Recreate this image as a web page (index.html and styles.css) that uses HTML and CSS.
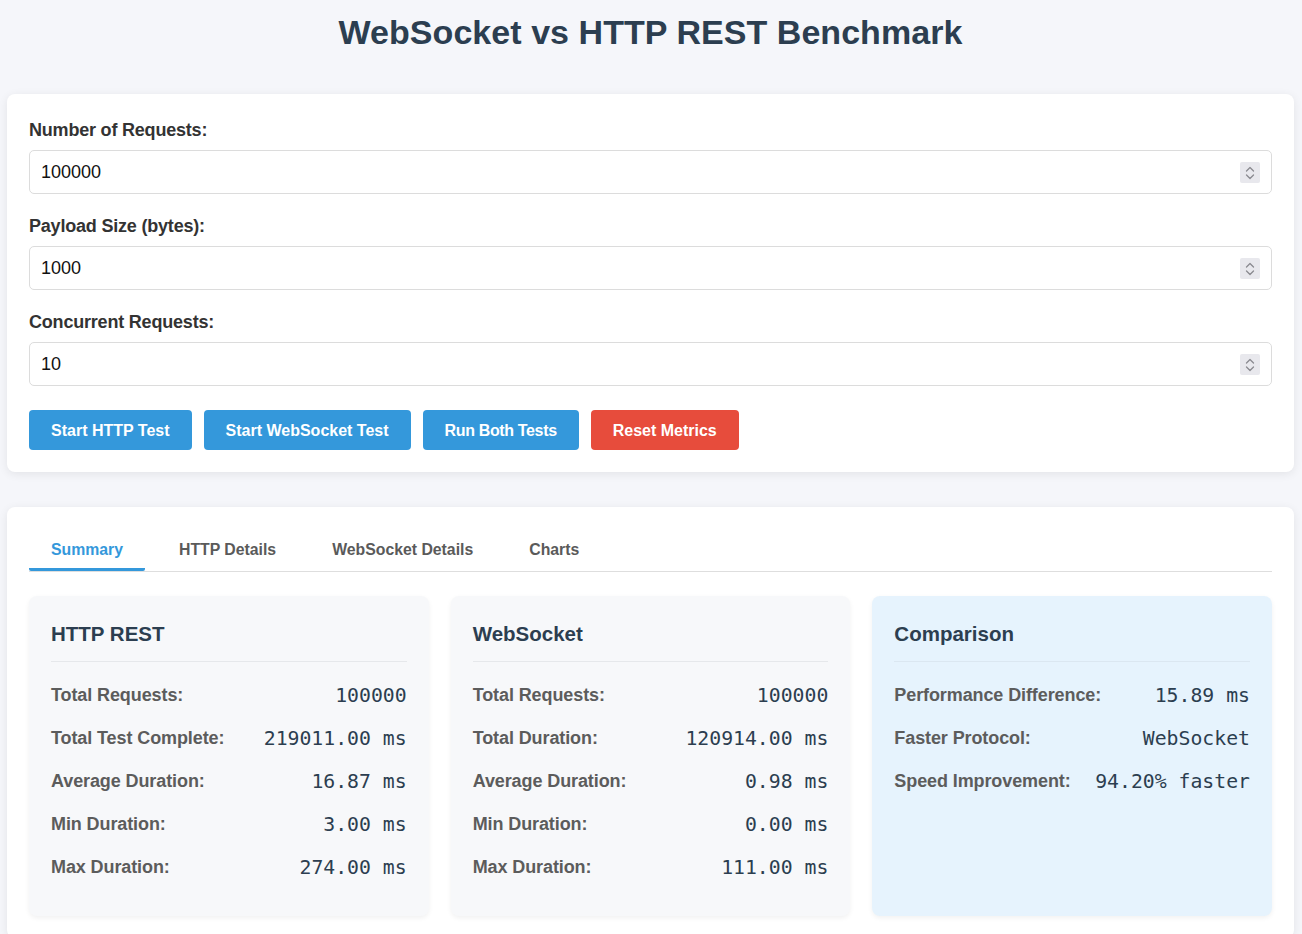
FILE: index.html
```html
<!DOCTYPE html>
<html lang="en">
<head>
<meta charset="utf-8">
<title>WebSocket vs HTTP REST Benchmark</title>
<link rel="stylesheet" href="styles.css">
</head>
<body>
<div class="page">
  <h1 class="title">WebSocket vs HTTP REST Benchmark</h1>

  <section class="panel config">
    <div class="field">
      <label class="field-label">Number of Requests:</label>
      <div class="num-input">
        <span class="num-value">100000</span>
        <span class="spinner"><svg width="12" height="16" viewBox="0 0 12 16"><path d="M2.5 6 L6 2.5 L9.5 6" fill="none" stroke="#8a8a90" stroke-width="1.3" stroke-linecap="round" stroke-linejoin="round"/><path d="M2.5 10 L6 13.5 L9.5 10" fill="none" stroke="#8a8a90" stroke-width="1.3" stroke-linecap="round" stroke-linejoin="round"/></svg></span>
      </div>
    </div>
    <div class="field">
      <label class="field-label">Payload Size (bytes):</label>
      <div class="num-input">
        <span class="num-value">1000</span>
        <span class="spinner"><svg width="12" height="16" viewBox="0 0 12 16"><path d="M2.5 6 L6 2.5 L9.5 6" fill="none" stroke="#8a8a90" stroke-width="1.3" stroke-linecap="round" stroke-linejoin="round"/><path d="M2.5 10 L6 13.5 L9.5 10" fill="none" stroke="#8a8a90" stroke-width="1.3" stroke-linecap="round" stroke-linejoin="round"/></svg></span>
      </div>
    </div>
    <div class="field">
      <label class="field-label">Concurrent Requests:</label>
      <div class="num-input">
        <span class="num-value">10</span>
        <span class="spinner"><svg width="12" height="16" viewBox="0 0 12 16"><path d="M2.5 6 L6 2.5 L9.5 6" fill="none" stroke="#8a8a90" stroke-width="1.3" stroke-linecap="round" stroke-linejoin="round"/><path d="M2.5 10 L6 13.5 L9.5 10" fill="none" stroke="#8a8a90" stroke-width="1.3" stroke-linecap="round" stroke-linejoin="round"/></svg></span>
      </div>
    </div>
    <div class="buttons">
      <button class="btn btn-blue">Start HTTP Test</button>
      <button class="btn btn-blue">Start WebSocket Test</button>
      <button class="btn btn-blue btn-narrow">Run Both Tests</button>
      <button class="btn btn-red">Reset Metrics</button>
    </div>
  </section>

  <section class="panel results">
    <div class="tabs">
      <div class="tab active">Summary</div>
      <div class="tab">HTTP Details</div>
      <div class="tab">WebSocket Details</div>
      <div class="tab">Charts</div>
    </div>
    <div class="grid">
      <div class="card">
        <h3 class="card-title">HTTP REST</h3>
        <div class="rows">
          <div class="row"><span class="row-label">Total Requests:</span><span class="row-value">100000</span></div>
          <div class="row"><span class="row-label">Total Test Complete:</span><span class="row-value">219011.00 ms</span></div>
          <div class="row"><span class="row-label">Average Duration:</span><span class="row-value">16.87 ms</span></div>
          <div class="row"><span class="row-label">Min Duration:</span><span class="row-value">3.00 ms</span></div>
          <div class="row"><span class="row-label">Max Duration:</span><span class="row-value">274.00 ms</span></div>
        </div>
      </div>
      <div class="card">
        <h3 class="card-title">WebSocket</h3>
        <div class="rows">
          <div class="row"><span class="row-label">Total Requests:</span><span class="row-value">100000</span></div>
          <div class="row"><span class="row-label">Total Duration:</span><span class="row-value">120914.00 ms</span></div>
          <div class="row"><span class="row-label">Average Duration:</span><span class="row-value">0.98 ms</span></div>
          <div class="row"><span class="row-label">Min Duration:</span><span class="row-value">0.00 ms</span></div>
          <div class="row"><span class="row-label">Max Duration:</span><span class="row-value">111.00 ms</span></div>
        </div>
      </div>
      <div class="card card-compare">
        <h3 class="card-title">Comparison</h3>
        <div class="rows">
          <div class="row"><span class="row-label">Performance Difference:</span><span class="row-value">15.89 ms</span></div>
          <div class="row"><span class="row-label">Faster Protocol:</span><span class="row-value">WebSocket</span></div>
          <div class="row"><span class="row-label">Speed Improvement:</span><span class="row-value">94.20% faster</span></div>
        </div>
      </div>
    </div>
  </section>
</div>
</body>
</html>
```

FILE: styles.css
```css
* { box-sizing: border-box; }

html, body {
  margin: 0;
  padding: 0;
  background: #f5f6fa;
  font-family: "Liberation Sans", Arial, sans-serif;
  color: #333;
}

.page {
  width: 1287px;
  margin-left: 7px;
  padding-bottom: 40px;
}

.title {
  margin: 10px 0 40px;
  font-size: 34px;
  line-height: 44px;
  font-weight: 700;
  text-align: center;
  color: #2c3e50;
  letter-spacing: 0.05px;
}

.panel {
  background: #fff;
  border-radius: 8px;
  box-shadow: 0 2px 10px rgba(0, 0, 0, 0.08);
  padding: 22px;
}

.config { margin-bottom: 35px; }

.field { margin-bottom: 18px; }

.field-label {
  display: block;
  font-size: 18px;
  line-height: 28px;
  font-weight: 700;
  color: #333;
  margin-bottom: 6px;
  letter-spacing: -0.2px;
}

.num-input {
  display: flex;
  align-items: center;
  justify-content: space-between;
  height: 44px;
  border: 1px solid #dcdcdc;
  border-radius: 5px;
  padding: 1px 11px 0 11px;
  background: #fff;
}

.num-value {
  font-size: 18px;
  color: #111;
}

.spinner {
  display: flex;
  align-items: center;
  justify-content: center;
  width: 20px;
  height: 21px;
  background: #e8e8ed;
  border-radius: 2px;
}

.buttons {
  display: flex;
  gap: 12px;
  margin-top: 24px;
}

.btn {
  border: none;
  border-radius: 4px;
  height: 40px;
  padding: 2px 22px 0;
  font-family: "Liberation Sans", Arial, sans-serif;
  font-size: 16px;
  font-weight: 700;
  color: #fff;
}

.btn-narrow { letter-spacing: -0.35px; }

.btn-blue { background: #3498db; }
.btn-red { background: #e74c3c; }

.tabs {
  display: flex;
  gap: 12px;
  border-bottom: 1px solid #dedede;
}

.tab {
  padding: 11px 22px 8px;
  font-size: 15.8px;
  line-height: 20px;
  font-weight: 700;
  color: #5a5a5a;
  border-bottom: 3px solid transparent;
}

.tab.active {
  color: #3498db;
  border-bottom-color: #3498db;
  border-radius: 0 0 2px 2px;
}

.grid {
  display: grid;
  grid-template-columns: repeat(3, 1fr);
  gap: 22px;
  margin-top: 24px;
}

.card {
  background: #f7f8fa;
  border-radius: 8px;
  padding: 22px;
  box-shadow: 0 2px 5px rgba(0, 0, 0, 0.06);
  min-height: 320px;
}

.card-compare { background: #e6f3fd; }

.card-title {
  margin: 0;
  font-size: 20.5px;
  line-height: 31px;
  font-weight: 700;
  color: #2c3e50;
  padding-bottom: 12px;
  border-bottom: 1px solid #e6e8eb;
}

.card-compare .card-title { border-bottom-color: #dbe7f1; }

.rows { margin-top: 12px; }

.row {
  display: flex;
  justify-content: space-between;
  align-items: center;
  padding: 7px 0;
  line-height: 29px;
}

.row-label {
  font-size: 18px;
  font-weight: 700;
  color: #5c5c5c;
  letter-spacing: -0.1px;
}

.row-value {
  font-family: "DejaVu Sans Mono", "Liberation Mono", monospace;
  font-size: 19.8px;
  color: #2c3e50;
}
```
